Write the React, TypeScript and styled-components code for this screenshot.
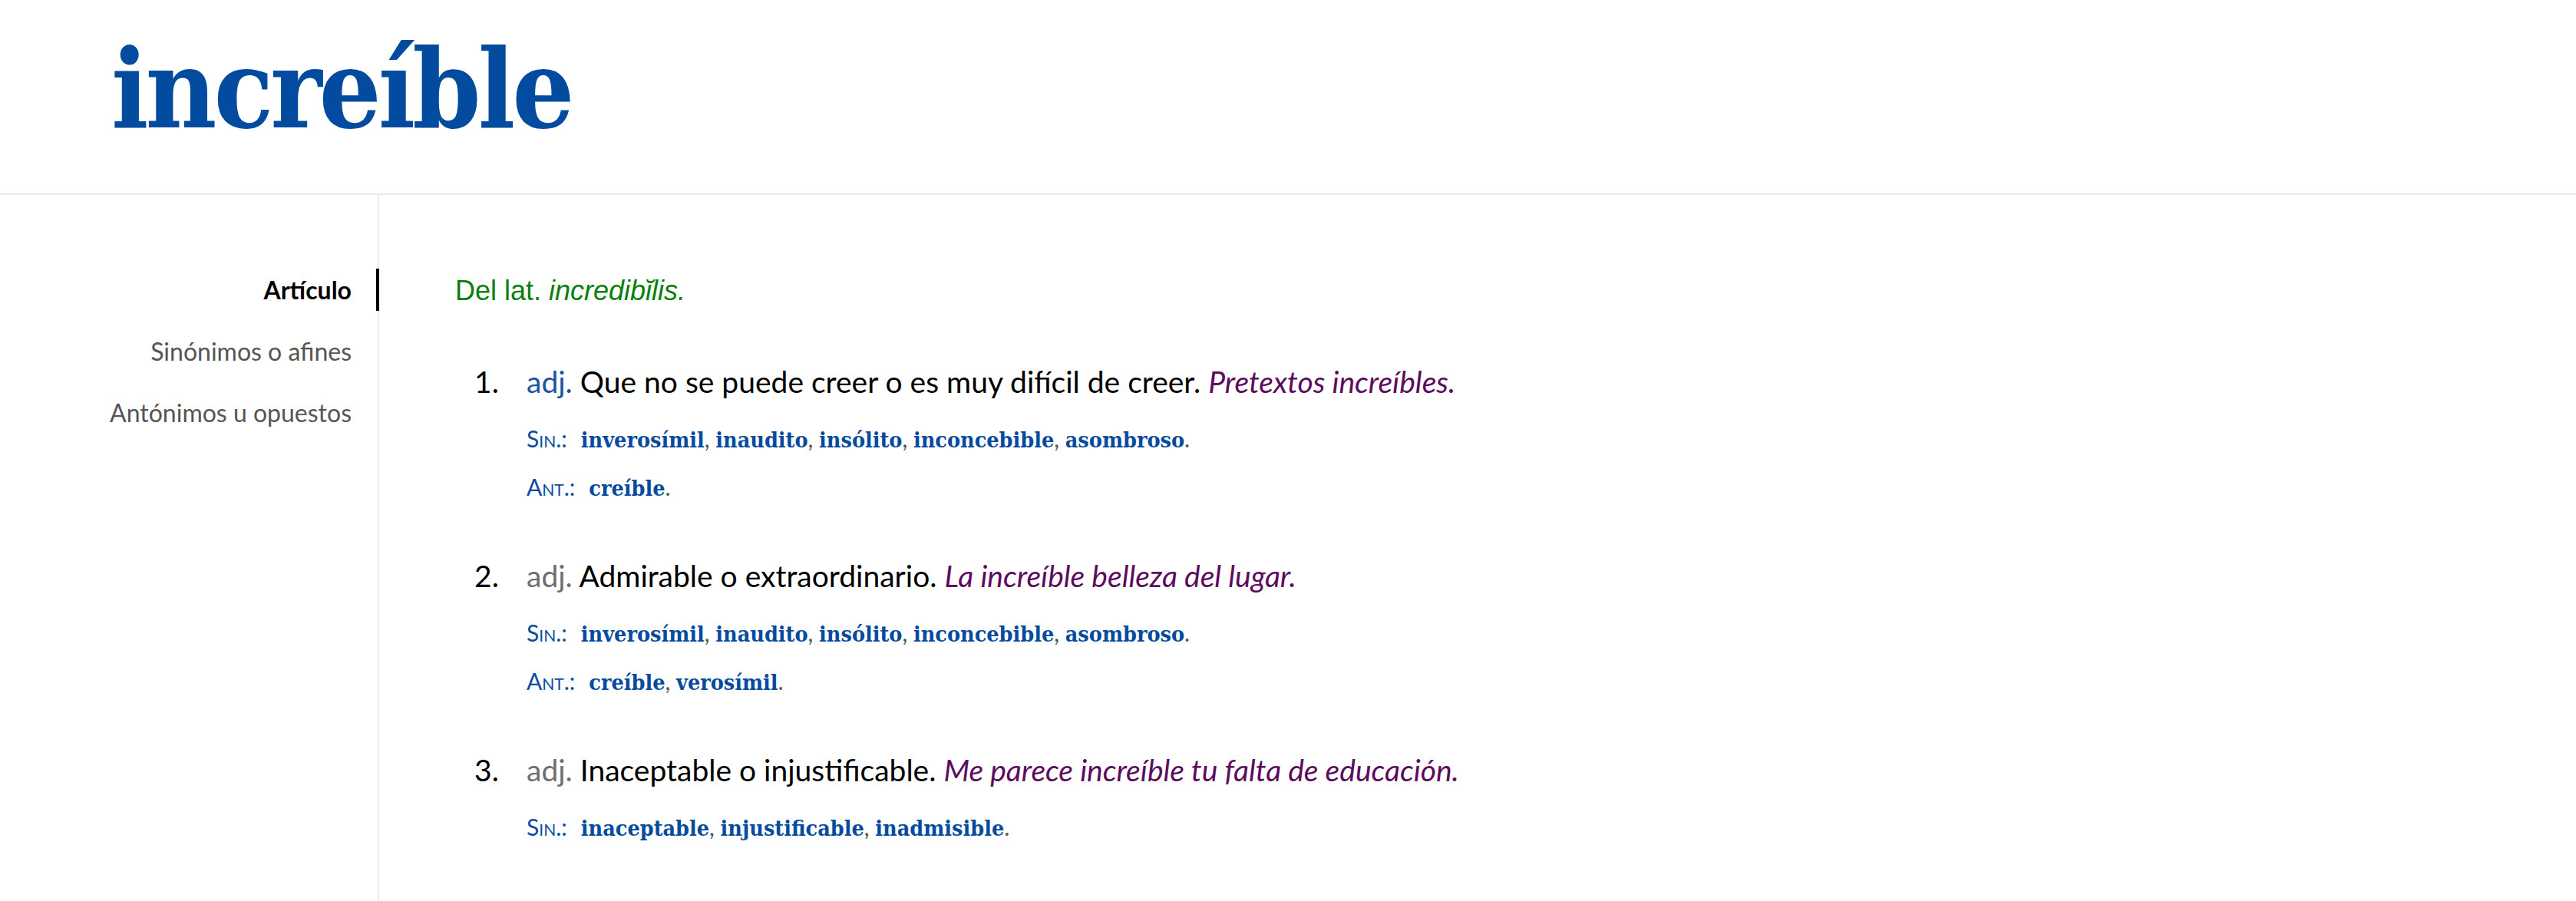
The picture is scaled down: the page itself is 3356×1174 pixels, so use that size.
import React from 'react'
import styled, { createGlobalStyle } from 'styled-components'

const GlobalStyle = createGlobalStyle`
  html, body {
    margin: 0;
    padding: 0;
    background: #fff;
  }
  #root {
    min-height: 100vh;
    display: flex;
    flex-direction: column;
  }
`

type Rel = { label: string; words: string[] }
type Sense = { n: number; main?: boolean; def: string; ex: string; rels: Rel[] }

const senses: Sense[] = [
  {
    n: 1,
    main: true,
    def: 'Que no se puede creer o es muy difícil de creer.',
    ex: 'Pretextos increíbles.',
    rels: [
      { label: 'Sin.:', words: ['inverosímil', 'inaudito', 'insólito', 'inconcebible', 'asombroso'] },
      { label: 'Ant.:', words: ['creíble'] },
    ],
  },
  {
    n: 2,
    def: 'Admirable o extraordinario.',
    ex: 'La increíble belleza del lugar.',
    rels: [
      { label: 'Sin.:', words: ['inverosímil', 'inaudito', 'insólito', 'inconcebible', 'asombroso'] },
      { label: 'Ant.:', words: ['creíble', 'verosímil'] },
    ],
  },
  {
    n: 3,
    def: 'Inaceptable o injustificable.',
    ex: 'Me parece increíble tu falta de educación.',
    rels: [{ label: 'Sin.:', words: ['inaceptable', 'injustificable', 'inadmisible'] }],
  },
]

const navItems = ['Artículo', 'Sinónimos o afines', 'Antónimos u opuestos']

export default function App() {
  return (
    <>
      <GlobalStyle />
      <Header>
        <Title>increíble</Title>
      </Header>
      <Body>
        <Sidebar>
          {navItems.map((item, i) => (
            <NavItem key={item} $active={i === 0}>
              {item}
            </NavItem>
          ))}
        </Sidebar>
        <Article>
          <Etym>
            Del lat. <i>incredibĭlis.</i>
          </Etym>
          {senses.map((s) => (
            <SenseBlock key={s.n}>
              <Num>{s.n}.</Num>
              <div>
                <DefLine>
                  <Abbr $main={s.main}>adj.</Abbr> {s.def} <Example>{s.ex}</Example>
                </DefLine>
                {s.rels.map((r) => (
                  <RelLine key={r.label}>
                    <RelLabel>{r.label}</RelLabel>
                    {r.words.map((w, i) => (
                      <React.Fragment key={w}>
                        <Word>{w}</Word>
                        <Punct>{i < r.words.length - 1 ? ', ' : '.'}</Punct>
                      </React.Fragment>
                    ))}
                  </RelLine>
                ))}
              </div>
            </SenseBlock>
          ))}
        </Article>
      </Body>
    </>
  )
}

const Header = styled.header`
  height: 254px;
  box-sizing: border-box;
  padding: 45px 0 0 145px;
  border-bottom: 2px solid #ececec;
`

const Title = styled.h1`
  margin: 0;
  font-family: 'DejaVu Serif', serif;
  font-stretch: condensed;
  font-weight: 700;
  font-size: 142px;
  line-height: 1;
  color: #034b9f;
  letter-spacing: -4px;
`

const Body = styled.div`
  flex: 1;
  display: grid;
  grid-template-columns: 494px 1fr;
`

const Sidebar = styled.nav`
  border-right: 2px solid #ececec;
  padding-top: 96px;
  display: flex;
  flex-direction: column;
  align-items: flex-end;
  gap: 25px;
`

const NavItem = styled.div<{ $active?: boolean }>`
  font-family: Lato, sans-serif;
  font-size: 32px;
  line-height: 55px;
  font-weight: ${(p) => (p.$active ? 700 : 400)};
  color: ${(p) => (p.$active ? '#000' : '#555')};
  padding-right: 32px;
  border-right: 4px solid ${(p) => (p.$active ? '#000' : 'transparent')};
  margin-right: -2px;
`

const Article = styled.main`
  padding: 100px 0 0 99px;
`

const Etym = styled.div`
  font-family: 'Liberation Sans', Arial, sans-serif;
  font-size: 36px;
  line-height: 50px;
  color: #0b7f0b;
  margin-bottom: 66px;
`

const SenseBlock = styled.div`
  display: grid;
  grid-template-columns: 68px 1fr;
  padding-left: 25px;
  margin-bottom: 57px;
`

const Num = styled.div`
  font-family: Lato, sans-serif;
  font-size: 39px;
  line-height: 54px;
  color: #000;
`

const DefLine = styled.div`
  font-family: Lato, sans-serif;
  font-size: 39px;
  line-height: 54px;
  color: #000;
  margin-bottom: 16px;
`

const Abbr = styled.span<{ $main?: boolean }>`
  color: ${(p) => (p.$main ? '#1a55a3' : '#6f6f6f')};
`

const Example = styled.i`
  color: #5d0b5e;
`

const RelLine = styled.div`
  font-family: Lato, sans-serif;
  font-size: 30px;
  line-height: 63px;
  color: #0a4c9e;
`

const RelLabel = styled.span`
  font-variant: small-caps;
  margin-right: 18px;
`

const Word = styled.span`
  font-family: 'DejaVu Serif', serif;
  font-stretch: condensed;
  font-weight: 700;
  font-size: 28.5px;
  line-height: 1;
  color: #064b9e;
`

const Punct = styled.span`
  color: #555;
  white-space: pre;
`
